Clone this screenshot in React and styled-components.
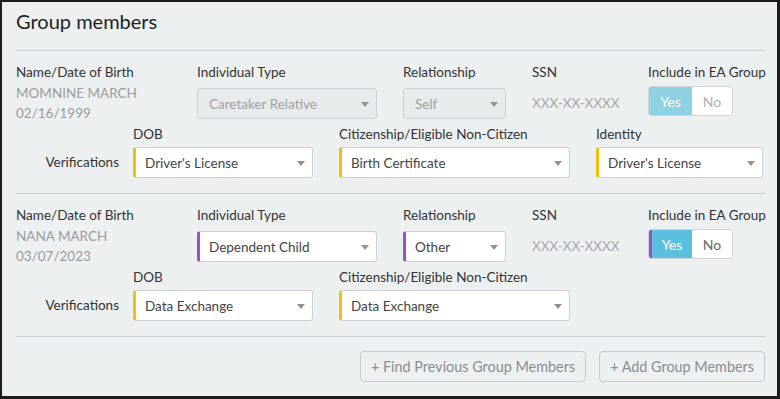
import React from 'react';
import styled, { createGlobalStyle } from 'styled-components';

const Global = createGlobalStyle`
  html, body { margin: 0; padding: 0; background: #edf0f1; }
  body { font-family: Lato, "Liberation Sans", sans-serif; }
  * { box-sizing: border-box; }
`;

const Frame = styled.div`
  width: 780px;
  height: 399px;
  border: solid #1c1c1c;
  border-width: 2px 3px 3px 2px;
  background: #edf0f1;
  padding: 7px 12px 0 14px;
  overflow: hidden;
`;

const Title = styled.h1`
  margin: 0;
  font-size: 20px;
  font-weight: 400;
  line-height: 25px;
  color: #222;
  padding-bottom: 16px;
  border-bottom: 1px solid #c9cccf;
`;

const Member = styled.section`
  padding: 12px 0 15px;
  border-bottom: 1px solid #c9cccf;
`;

const TopGrid = styled.div`
  display: grid;
  grid-template-columns: 155px 180px 103px 90px auto;
  column-gap: 26px;
  align-items: start;
`;

const Field = styled.div`
  display: flex;
  flex-direction: column;
  width: ${(p) => (p.$w ? `${p.$w}px` : 'auto')};
`;

const Label = styled.div`
  font-size: 13.5px;
  line-height: 18px;
  color: #333;
  white-space: nowrap;
`;

const NameBlock = styled.div`
  margin-top: 2px;
  font-size: 13.5px;
  line-height: 20px;
  color: #9b9b9b;
`;

const SelectBox = styled.div`
  margin-top: ${(p) => p.$mt || 0}px;
  height: 31px;
  display: flex;
  align-items: center;
  border: 1px solid ${(p) => (p.$disabled ? '#cfd2d4' : '#cdd0d2')};
  border-left: ${(p) => (p.$accent ? `3px solid ${p.$accent}` : `1px solid #cfd2d4`)};
  border-radius: 3px;
  background: ${(p) => (p.$disabled ? '#e8ebec' : '#fff')};
  padding-left: ${(p) => (p.$accent ? 9 : 11)}px;
  padding-right: 7px;
  font-size: 13.5px;
  color: ${(p) => (p.$disabled ? '#9da1a3' : '#444')};
  white-space: nowrap;
`;

const Caret = styled.span`
  margin-left: auto;
  width: 0;
  height: 0;
  margin-top: 2px;
  border-left: 4px solid transparent;
  border-right: 4px solid transparent;
  border-top: 5px solid #8e9294;
`;

const SSNText = styled.div`
  margin-top: 7px;
  height: 31px;
  line-height: 31px;
  font-size: 13.5px;
  color: #a6a9ab;
`;

const Toggle = styled.div`
  margin-top: 5px;
  display: flex;
  width: 85px;
  height: 30px;
  border: 1px solid #d2d5d7;
  border-radius: 3px;
  overflow: hidden;
  background: #fff;
`;

const ToggleOpt = styled.div`
  flex: ${(p) => (p.$first ? '0 0 43px' : '1')};
  display: flex;
  align-items: center;
  justify-content: center;
  font-size: 14px;
  background: ${(p) => (p.$on ? p.$onColor : '#fff')};
  color: ${(p) => (p.$on ? '#fff' : p.$offColor)};
  border-left: ${(p) => (p.$accent ? `3px solid ${p.$accent}` : 'none')};
`;

const VerifRow = styled.div`
  margin-top: 2px;
  display: flex;
  align-items: flex-end;
  gap: 26px;
`;

const VerifLabel = styled.div`
  width: 103px;
  margin-right: -12px;
  text-align: right;
  font-size: 13.5px;
  line-height: 31px;
  color: #333;
`;

const VerifField = styled(Field)`
  & > ${SelectBox} { margin-top: 4px; }
`;

const Actions = styled.div`
  display: flex;
  justify-content: flex-end;
  gap: 13px;
  margin-top: 14px;
`;

const Button = styled.button`
  height: 31px;
  padding: 0 10px;
  border: 1px solid #c8cbcd;
  border-radius: 4px;
  background: transparent;
  font-family: Lato, "Liberation Sans", sans-serif;
  font-size: 14.4px;
  color: #8a8d90;
  cursor: pointer;
`;

const YELLOW = '#f0c010';
const PURPLE = '#9b50c8';

function Select({ value, accent, disabled, mt }) {
  return (
    <SelectBox $accent={accent} $disabled={disabled} $mt={mt}>
      <span>{value}</span>
      <Caret />
    </SelectBox>
  );
}

const members = [
  {
    name: 'MOMNINE MARCH',
    dob: '02/16/1999',
    type: 'Caretaker Relative',
    rel: 'Self',
    disabled: true,
    typeAccent: null,
    relAccent: null,
    toggleOn: '#8ed1e2',
    toggleOff: '#aeb1b3',
    toggleAccent: null,
    verifs: [
      { label: 'DOB', value: "Driver's License", w: 180 },
      { label: 'Citizenship/Eligible Non-Citizen', value: 'Birth Certificate', w: 231 },
      { label: 'Identity', value: "Driver's License", w: 167 },
    ],
  },
  {
    name: 'NANA MARCH',
    dob: '03/07/2023',
    type: 'Dependent Child',
    rel: 'Other',
    disabled: false,
    typeAccent: PURPLE,
    relAccent: PURPLE,
    toggleOn: '#5bc0de',
    toggleOff: '#666',
    toggleAccent: PURPLE,
    verifs: [
      { label: 'DOB', value: 'Data Exchange', w: 180 },
      { label: 'Citizenship/Eligible Non-Citizen', value: 'Data Exchange', w: 231 },
    ],
  },
];

export default function App() {
  return (
    <>
      <Global />
      <Frame>
        <Title>Group members</Title>
        {members.map((m) => (
          <Member key={m.name}>
            <TopGrid>
              <Field>
                <Label>Name/Date of Birth</Label>
                <NameBlock>
                  <div>{m.name}</div>
                  <div>{m.dob}</div>
                </NameBlock>
              </Field>
              <Field>
                <Label>Individual Type</Label>
                <Select value={m.type} disabled={m.disabled} accent={m.typeAccent} mt={7} />
              </Field>
              <Field>
                <Label>Relationship</Label>
                <Select value={m.rel} disabled={m.disabled} accent={m.relAccent} mt={7} />
              </Field>
              <Field>
                <Label>SSN</Label>
                <SSNText>XXX-XX-XXXX</SSNText>
              </Field>
              <Field>
                <Label>Include in EA Group</Label>
                <Toggle>
                  <ToggleOpt $first $on $onColor={m.toggleOn} $accent={m.toggleAccent}>
                    Yes
                  </ToggleOpt>
                  <ToggleOpt $offColor={m.toggleOff}>No</ToggleOpt>
                </Toggle>
              </Field>
            </TopGrid>
            <VerifRow>
              <VerifLabel>Verifications</VerifLabel>
              {m.verifs.map((v) => (
                <VerifField key={v.label} $w={v.w}>
                  <Label>{v.label}</Label>
                  <Select value={v.value} accent={YELLOW} />
                </VerifField>
              ))}
            </VerifRow>
          </Member>
        ))}
        <Actions>
          <Button>+ Find Previous Group Members</Button>
          <Button>+ Add Group Members</Button>
        </Actions>
      </Frame>
    </>
  );
}
